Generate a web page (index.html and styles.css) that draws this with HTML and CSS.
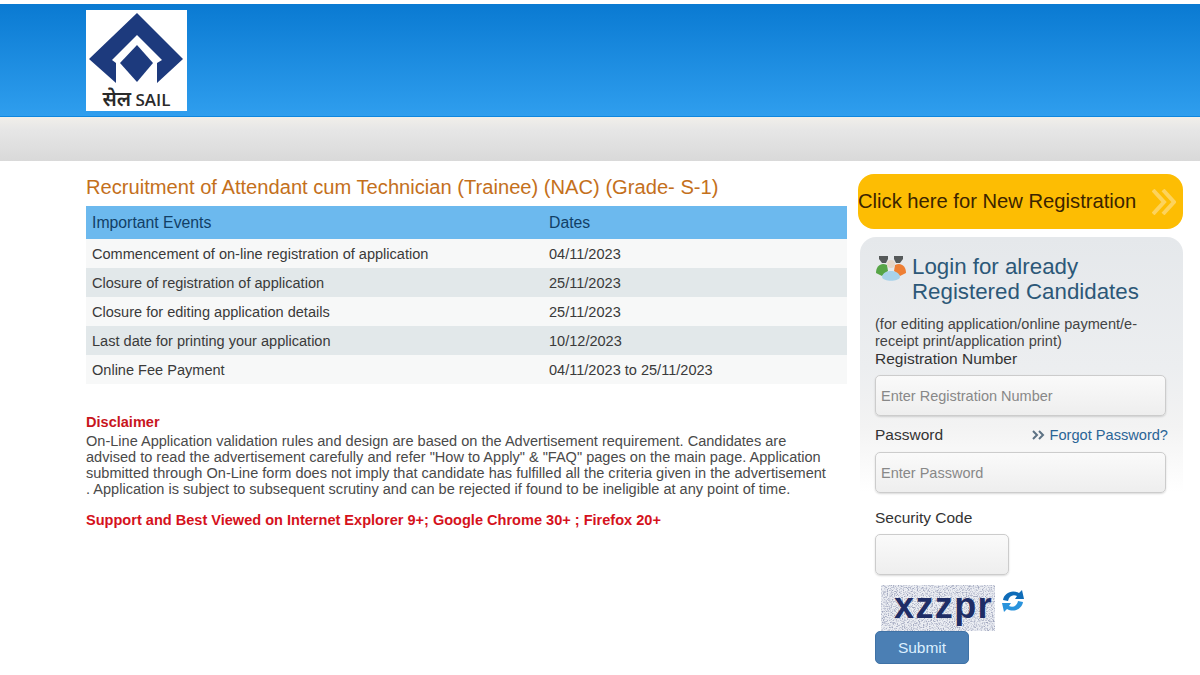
FILE: index.html
```html
<!DOCTYPE html>
<html lang="en">
<head>
    <meta charset="UTF-8">
    <meta name="viewport" content="width=device-width, initial-scale=1.0">
    <title>SAIL Recruitment</title>
    <link rel="stylesheet" href="styles.css">
</head>
<body>
    <header class="top-bar">
        <div class="logo">
            <svg class="logo-mark" width="101" height="76" viewBox="0 0 101 76">
                <path fill="#1d3a7d" d="M51 3 L97 49 L71 73 L71 53 L76 50 L51 25 L26 50 L30 53 L30 73 L3 49 Z"/>
                <path fill="#1d3a7d" d="M51 35 L67 53 L51 72 L34 53 Z"/>
            </svg>
            <div class="logo-text"><span class="logo-hindi">सेल</span> SAIL</div>
        </div>
    </header>
    <div class="grey-band"></div>

    <main class="content">
        <section class="left-col">
            <h1>Recruitment of Attendant cum Technician (Trainee) (NAC) (Grade- S-1)</h1>
            <table class="events">
                <thead>
                    <tr><th class="col-event">Important Events</th><th>Dates</th></tr>
                </thead>
                <tbody>
                    <tr><td>Commencement of on-line registration of application</td><td>04/11/2023</td></tr>
                    <tr><td>Closure of registration of application</td><td>25/11/2023</td></tr>
                    <tr><td>Closure for editing application details</td><td>25/11/2023</td></tr>
                    <tr><td>Last date for printing your application</td><td>10/12/2023</td></tr>
                    <tr><td>Online Fee Payment</td><td>04/11/2023 to 25/11/2023</td></tr>
                </tbody>
            </table>

            <h2 class="disclaimer-title">Disclaimer</h2>
            <p class="disclaimer">On-Line Application validation rules and design are based on the Advertisement requirement. Candidates are advised to read the advertisement carefully and refer "How to Apply" &amp; "FAQ" pages on the main page. Application submitted through On-Line form does not imply that candidate has fulfilled all the criteria given in the advertisement . Application is subject to subsequent scrutiny and can be rejected if found to be ineligible at any point of time.</p>
            <p class="browser-note">Support and Best Viewed on Internet Explorer 9+; Google Chrome 30+ ; Firefox 20+</p>
        </section>

        <aside class="right-col">
            <a class="register-btn" href="#">
                <span>Click here for New Registration</span>
                <svg width="24" height="26" viewBox="0 0 24 26" fill="none" stroke="#fdd35c" stroke-width="4">
                    <path d="M1 1 L12 13 L1 25"/>
                    <path d="M11 1 L22 13 L11 25"/>
                </svg>
            </a>

            <form class="login-panel">
                <div class="login-head">
                    <svg class="people-icon" width="32" height="28" viewBox="0 0 32 28">
                        <path fill="#55595a" d="M4 2 L13 2 L13 5 L11 9 L7 9 L4 5 Z"/>
                        <path fill="#55595a" d="M19 2 L28 2 L28 5 L25 9 L21 9 L19 5 Z"/>
                        <path fill="#ee7f35" d="M20 11 C26 8 31 12 31 19 L25 22 L19 17 Z"/>
                        <path fill="#57a547" d="M12 11 C6 8 1 12 1 19 L7 22 L13 17 Z"/>
                        <circle cx="16" cy="10" r="4" fill="#e6d6c8"/>
                        <path fill="#a8d2ea" d="M7 23 C8 15 24 15 25 23 C24 28 8 28 7 23 Z"/>
                    </svg>
                    <h2>Login for already Registered Candidates</h2>
                </div>
                <p class="login-note">(for editing application/online payment/e-receipt print/application print)</p>
                <label class="field-label" for="regno">Registration Number</label>
                <input class="text-input" id="regno" type="text" placeholder="Enter Registration Number">
                <div class="password-row">
                    <label class="field-label" for="pwd">Password</label>
                    <a class="forgot" href="#">
                        <svg width="13" height="10" viewBox="0 0 13 10" fill="none" stroke="#5d7284" stroke-width="2">
                            <path d="M1 1 L5 5 L1 9"/>
                            <path d="M7 1 L11 5 L7 9"/>
                        </svg>
                        Forgot Password?
                    </a>
                </div>
                <input class="text-input" id="pwd" type="text" placeholder="Enter Password">
                <label class="field-label security-label" for="code">Security Code</label>
                <input class="text-input code-input" id="code" type="text">
                <div class="captcha-row">
                    <div class="captcha">
                        <svg class="captcha-noise" width="114" height="46">
                            <filter id="specks">
                                <feTurbulence type="fractalNoise" baseFrequency="0.8" numOctaves="2" seed="7"/>
                                <feColorMatrix values="0 0 0 0 0.36  0 0 0 0 0.39  0 0 0 0 0.52  2.400 2.400 0 0 -2.200"/>
                            </filter>
                            <rect width="114" height="46" fill="#eceef3"/>
                            <rect width="114" height="46" filter="url(#specks)"/>
                        </svg>
                        <span class="captcha-text">xzzpr</span>
                    </div>
                    <svg class="refresh" width="24" height="24" viewBox="0 0 24 24">
                        <path fill="#0f6cb8" d="M2 11 C3 4 11 0 18 4 L21 1 L23 10 L14 10 L16 7 C12 5 8 7 7 12 Z"/>
                        <path fill="#2a93dc" d="M22 13 C21 20 13 24 6 20 L3 23 L1 14 L10 14 L8 17 C12 19 16 17 17 12 Z"/>
                    </svg>
                </div>
                <button class="submit-btn" type="button">Submit</button>
            </form>
        </aside>
    </main>
</body>
</html>
```

FILE: styles.css
```css
* {
    box-sizing: border-box;
}

body {
    margin: 0;
    height: 675px;
    overflow: hidden;
    background-color: #fff;
    font-family: "Liberation Sans", Arial, sans-serif;
    color: #333;
}

.top-bar {
    height: 113px;
    margin-top: 4px;
    padding: 6px 0 0 86px;
    background: linear-gradient(to bottom, #0a7ad2, #2f9eee);
    border-bottom: 1px solid #0e86de;
}

.logo {
    width: 101px;
    height: 101px;
    background-color: #fff;
}

.logo-mark {
    display: block;
}

.logo-text {
    margin-top: 2px;
    text-align: center;
    font-family: "Open Sans", "Noto Sans", sans-serif;
    font-size: 17px;
    line-height: 22px;
    font-weight: 600;
    color: #2a2a2a;
    white-space: nowrap;
}

.logo-hindi {
    font-size: 20px;
}

.grey-band {
    height: 44px;
    background: linear-gradient(to bottom, #f1efea, #e6e6e6 30%, #d9d9d9);
}

.content {
    display: flex;
    padding-left: 86px;
    gap: 11px;
}

.left-col {
    width: 761px;
    padding-top: 14px;
}

h1 {
    margin: 0 0 7px;
    font-size: 20.15px;
    line-height: 24px;
    font-weight: normal;
    color: #c4701c;
}

.events {
    width: 100%;
    border-collapse: collapse;
    font-size: 14.56px;
    color: #3a3a3a;
}

.events th {
    height: 33px;
    padding: 0 6px;
    text-align: left;
    font-size: 15.8px;
    font-weight: normal;
    color: #123f66;
    background-color: #6cb9ee;
}

.col-event {
    width: 457px;
}

.events td {
    height: 29px;
    padding: 0 6px;
    background-color: #f7f8f8;
}

.events tbody tr:nth-child(even) td {
    background-color: #e2e8ea;
}

.disclaimer-title {
    margin: 30px 0 0;
    font-size: 14.56px;
    line-height: 16px;
    color: #c8161d;
}

.disclaimer {
    width: 745px;
    margin: 3px 0 0;
    font-size: 14.56px;
    line-height: 16px;
    color: #4a4a4a;
}

.browser-note {
    margin: 15px 0 0;
    font-size: 14.56px;
    line-height: 16px;
    font-weight: bold;
    color: #d5121c;
}

.right-col {
    width: 325px;
    padding-top: 13px;
}

.register-btn {
    display: flex;
    align-items: center;
    justify-content: space-between;
    height: 55px;
    padding-right: 7px;
    border-radius: 16px;
    background-color: #fdbd03;
    color: #3b2400;
    font-size: 20.2px;
    text-decoration: none;
}

.login-panel {
    margin-top: 8px;
    margin-left: 2px;
    height: 440px;
    padding: 17px 15px 0 15px;
    border-radius: 16px 16px 0 0;
    background: linear-gradient(to bottom, #e5e8eb 0, #eceef0 130px, #f3f3f3 190px, #ffffff 255px);
}

.login-head {
    display: flex;
    gap: 5px;
}

.people-icon {
    flex: none;
}

.login-head h2 {
    margin: 0;
    font-size: 22.3px;
    line-height: 25px;
    font-weight: normal;
    color: #2c5878;
}

.login-note {
    margin: 12px 0 0;
    width: 285px;
    font-size: 14.56px;
    line-height: 17px;
    color: #444;
}

.field-label {
    display: block;
    font-size: 15.5px;
    line-height: 17px;
    color: #333;
}

.text-input {
    display: block;
    width: 291px;
    height: 41px;
    padding: 0 5px;
    border: 1px solid #ccc;
    border-radius: 5px;
    background: linear-gradient(to bottom, #fafafa, #eeeeee);
    font-family: inherit;
    font-size: 14.5px;
    box-shadow: 0 1px 2px rgba(0, 0, 0, 0.15);
}

.text-input::placeholder {
    color: #888;
    opacity: 1;
}

#regno {
    margin-top: 8px;
}

.password-row {
    display: flex;
    justify-content: space-between;
    align-items: center;
    width: 293px;
    margin: 10px 0 9px;
}

.forgot {
    display: flex;
    align-items: center;
    gap: 5px;
    font-size: 14.6px;
    color: #2a6496;
    text-decoration: none;
}

.security-label {
    margin-top: 16px;
}

.code-input {
    width: 134px;
    margin-top: 8px;
}

.captcha-row {
    display: flex;
    margin-top: 10px;
    padding-left: 6px;
    gap: 6px;
}

.captcha {
    position: relative;
    width: 114px;
    height: 46px;
    padding-left: 13px;
    font-size: 36px;
    font-weight: bold;
    line-height: 42px;
    letter-spacing: 1.400px;
    color: #1f2d66;
}

.captcha-noise {
    position: absolute;
    left: 0;
    top: 0;
}

.captcha-text {
    position: relative;
}

.refresh {
    margin-top: 4px;
}

.submit-btn {
    display: block;
    position: relative;
    width: 94px;
    height: 33px;
    border: 1px solid #3f72a6;
    border-radius: 5px;
    background-color: #4b7fb4;
    color: #dcefff;
    font-family: inherit;
    font-size: 15.5px;
}
```
